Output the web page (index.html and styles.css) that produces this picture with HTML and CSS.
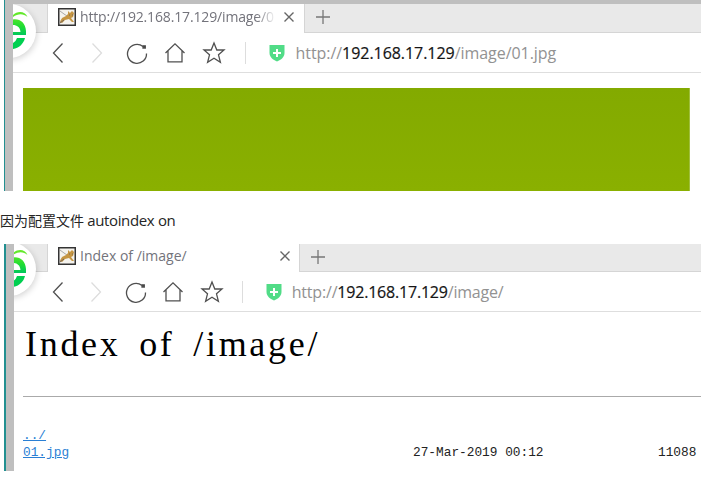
FILE: index.html
```html
<!DOCTYPE html>
<html lang="zh">
<head>
<meta charset="utf-8">
<title>autoindex</title>
<link rel="stylesheet" href="styles.css">
</head>
<body>
<svg class="defs" width="0" height="0">
  <defs>
    <linearGradient id="green" x1="0" y1="0" x2="0" y2="1"><stop offset="0" stop-color="#4be42c"/><stop offset=".45" stop-color="#20dc33"/><stop offset="1" stop-color="#00c75d"/></linearGradient>
    <symbol id="logo" viewBox="0 0 24 52">
      <path d="M0 15.500C7 14.500 12.500 19 13 27V31H0V28H7.500C7 23 4 21 0 21Z" fill="url(#green)"/>
      <path d="M4 34H12C10.500 40 6 44 0 45V39Q3 37.500 4 34Z" fill="#00cf50"/>
      <path d="M0 11C4 7 12 6.500 14.500 13C10 9 5 9.500 0 13Z" fill="#64e82c"/>
    </symbol>
    <symbol id="cat" viewBox="0 0 18 18">
      <path d="M.75.75H17.250V17.250H.75Z" fill="#f5f3ee" stroke="#343434" stroke-width="1.500"/>
      <path d="M2 3L6 6L9 8M2 14L5 10" stroke="#aaa" fill="none"/>
      <path d="M2 14L4 10L8 8L10 6L10 3L12 5L14 3L16 5L15 9L13 10L16 14L14 14L11 11L7 12L4 15Z" fill="#c69643"/>
      <path d="M2 15L6 12M11 7H12M14 7H15" stroke="#776655" fill="none"/>
    </symbol>
    <symbol id="back" viewBox="0 0 24 24"><path d="M16.500 2.500L7.500 12L16.500 21.500"/></symbol>
    <symbol id="forward" viewBox="0 0 24 24"><path d="M7.500 2.500L16.500 12L7.500 21.500"/></symbol>
    <symbol id="reload" viewBox="0 0 24 24"><path d="M19 5.500A9.500 9.500 0 1 0 22.500 12.500"/><path d="M19 4.800H21.300V7H19Z" fill="#333"/></symbol>
    <symbol id="home" viewBox="0 0 24 24"><path d="M2.500 12L12 2.800L21.500 12M5 10V20.800H19V10"/></symbol>
    <symbol id="star" viewBox="0 0 24 24"><path d="M12 2L14.800 9H22L16.500 13.800L18.400 21.300L12 17.200L5.600 21.300L7.500 13.800L2 9H9.200Z"/></symbol>
    <symbol id="shield" viewBox="0 0 16 18"><path d="M.5 1H15.500V9C15.500 13 12 16 8 17.500C4 16 .5 13 .5 9Z" fill="#51dc87"/><path d="M8 5V13M4 9H12" stroke="#fff" stroke-width="2"/></symbol>
    <symbol id="close" viewBox="0 0 12 12"><path d="M1.500 1.500L10.500 10.500M10.500 1.500L1.500 10.500"/></symbol>
    <symbol id="plus" viewBox="0 0 16 16"><path d="M8 1V15M1 8H15"/></symbol>
  </defs>
</svg>

<section class="shot shot-photo">
  <div class="window">
    <div class="tabs">
      <div class="stub"></div>
      <div class="tab">
        <svg class="favicon"><use href="#cat"/></svg>
        <span class="tab-title faded">http://192.168.17.129/image/0</span>
        <svg class="close"><use href="#close"/></svg>
      </div>
      <div class="rest"><svg class="plus"><use href="#plus"/></svg></div>
    </div>
    <div class="toolbar">
      <div class="tool"><svg><use href="#back"/></svg></div>
      <div class="tool disabled"><svg><use href="#forward"/></svg></div>
      <div class="tool"><svg><use href="#reload"/></svg></div>
      <div class="tool"><svg><use href="#home"/></svg></div>
      <div class="tool"><svg><use href="#star"/></svg></div>
      <div class="divider"></div>
      <svg class="shield"><use href="#shield"/></svg>
      <div class="url">http://<b>192.168.17.129</b>/image/01.jpg</div>
    </div>
    <div class="photo"></div>
    <svg class="logo"><use href="#logo"/></svg>
  </div>
</section>

<p class="caption">因为配置文件 <span>autoindex on</span></p>

<section class="shot shot-index">
  <div class="window">
    <div class="tabs">
      <div class="stub"></div>
      <div class="tab">
        <svg class="favicon"><use href="#cat"/></svg>
        <span class="tab-title">Index of /image/</span>
        <svg class="close"><use href="#close"/></svg>
      </div>
      <div class="rest"><svg class="plus"><use href="#plus"/></svg></div>
    </div>
    <div class="toolbar">
      <div class="tool"><svg><use href="#back"/></svg></div>
      <div class="tool disabled"><svg><use href="#forward"/></svg></div>
      <div class="tool"><svg><use href="#reload"/></svg></div>
      <div class="tool"><svg><use href="#home"/></svg></div>
      <div class="tool"><svg><use href="#star"/></svg></div>
      <div class="divider"></div>
      <svg class="shield"><use href="#shield"/></svg>
      <div class="url">http://<b>192.168.17.129</b>/image/</div>
    </div>
    <div class="page">
      <h1>Index of /image/</h1>
      <hr>
      <div class="listing">
        <a>../</a>
        <div class="row"><a>01.jpg</a><span>27-Mar-2019 00:12</span><span>11088</span></div>
      </div>
    </div>
    <svg class="logo"><use href="#logo"/></svg>
  </div>
</section>
</body>
</html>
```
FILE: styles.css
```css
* { box-sizing: border-box; }
body { margin: 0; background: #fff; overflow: hidden; }
svg { display: block; flex: none; }
.defs { position: absolute; }

.shot {
  width: 697px;
  margin-left: 4px;
  border-left: 1px solid #218f90;
  overflow: hidden;
}
.shot-photo { height: 191px; background: #bfbfbf; padding: 4px 0 0 8px; }
.shot-index { height: 227px; background: #bfbfbf; padding-left: 8px; border-left-width: 2px; }
.window { position: relative; height: 100%; background: #fff; overflow: hidden; }
.shot-photo .window { --cell: 39px; --lead: 25.5px; }
.shot-index .window { --cell: 38.4px; --lead: 24.800px; }

.window::before {
  content: "";
  position: absolute;
  left: -31px;
  top: 0;
  width: 54px;
  height: 54px;
  border-radius: 50%;
  background: #fff;
  box-shadow: 1px 2px 6px rgba(0, 0, 0, .17);
}
.logo { position: absolute; left: 0; top: 0; width: 24px; height: 52px; }
.shot-index .window::before { left: -32px; top: -2px; }
.shot-index .logo { left: -1px; top: -2px; }

.tabs { display: flex; height: 29px; }
.shot-index .tabs { height: 28px; }
.stub { width: 35px; background: #e9e9e9; border: solid #d5d5d5; border-width: 0 1px 1px 0; }
.shot-index .stub { width: 34px; }
.tab { display: flex; align-items: center; width: 256px; padding: 0 8px 4px 10px; }
.shot-index .tab { width: 251px; padding-right: 8px; }
.rest { flex: 1; background: #e9e9e9; border: solid #d5d5d5; border-width: 0 0 1px 1px; padding: 5px 10px; }
.favicon { width: 18px; height: 18px; }
.tab-title {
  flex: 1;
  margin-left: 4px;
  font: 14px/20px "Open Sans", sans-serif;
  color: #73737b;
  white-space: nowrap;
}
.faded { flex: 0 0 196px; margin-right: 7px; letter-spacing: -.15px; mask-image: linear-gradient(90deg, #000 90%, transparent); }
.close { width: 12px; height: 12px; stroke: #666; stroke-width: 1.400; }
.plus { width: 16px; height: 16px; stroke: #777; stroke-width: 1.300; }

.toolbar {
  display: flex;
  align-items: center;
  height: 40px;
  padding-left: var(--lead);
  border-bottom: 1px solid #dedede;
}
.tool { width: var(--cell); display: flex; justify-content: center; }
.tool svg { width: 24px; height: 24px; fill: none; stroke: #505050; stroke-width: 1.300; }
.tool.disabled svg { stroke: #ddd; }
.divider { width: 1px; height: 22px; margin: 0 23px 0 11px; background: #ddd; }
.shield { width: 16px; height: 18px; }
.url {
  margin-left: 11px;
  font: 16px/22px "Open Sans", sans-serif;
  letter-spacing: -.05px;
  color: #929292;
  white-space: nowrap;
}
.shot-index .url { letter-spacing: -.2px; margin-left: 10px; }
.url b { font-weight: 400; color: #151515; -webkit-text-stroke: .2px #151515; }

.photo { width: 667px; height: 103px; margin: 15px 0 0 10px; background: linear-gradient(#83aa00, #8ab000); border-right: 1px solid #9fbe3b; }

.caption {
  height: 53px;
  margin: 0;
  padding-top: 17px;
  font: 14px/24px "Noto Sans CJK SC", sans-serif;
  color: #252525;
  white-space: nowrap;
}
.caption span { font: 15px/24px "Open Sans", sans-serif; letter-spacing: -.35px; }

.page { padding-left: 9px; font-family: "Liberation Mono", monospace; }
.page h1 {
  margin: 12px 0 0;
  padding-left: 2px;
  font: 400 36px/40px "Liberation Serif", serif;
  letter-spacing: 2.700px;
  word-spacing: 7px;
  color: #000;
}
.page hr { margin: 32px 0 0; height: 1px; border: 0; background: #aaa; }
.listing { padding-top: 30px; font-size: 12.800px; line-height: 17px; color: #222; }
.listing a { color: #2a7fd4; text-decoration: underline; }
.row { display: grid; grid-template-columns: 390px 245px 1fr; white-space: nowrap; }
.row a { justify-self: start; }
```
